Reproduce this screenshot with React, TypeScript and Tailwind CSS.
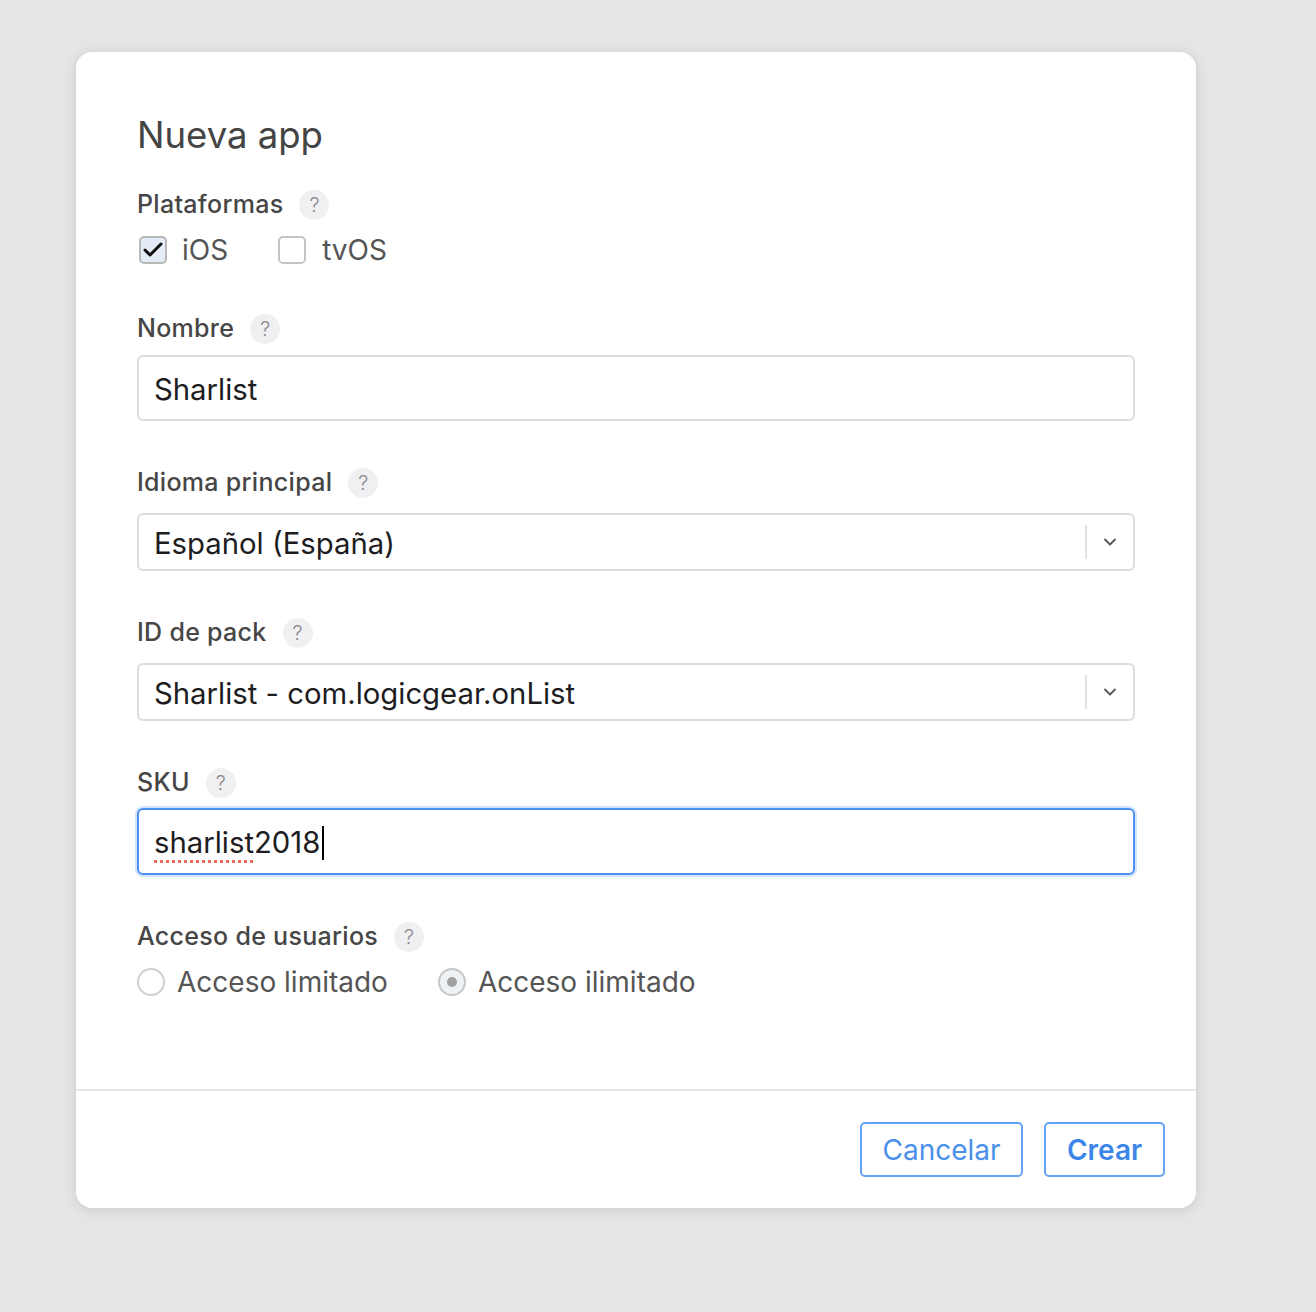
import { Check, ChevronDown } from "lucide-react";

function Help() {
  return (
    <span className="ml-[16px] inline-flex h-[30px] w-[30px] items-center justify-center rounded-full bg-[#f0f0f3] text-[20px] font-light tracking-normal text-[#8a8a8e]">
      ?
    </span>
  );
}

function Label({ text, className = "" }: { text: string; className?: string }) {
  return (
    <div
      className={`flex h-[30px] items-center text-[25px] font-medium tracking-[0.3px] text-[#464646] ${className}`}>
      <span>{text}</span>
      <Help />
    </div>
  );
}

function Select({ value, className = "" }: { value: string; className?: string }) {
  return (
    <div
      className={`flex h-[58px] items-center rounded-[6px] border-2 border-[#dcdcdc] pl-[15px] ${className}`}>
      <span className="flex-1 pt-[3px] text-[29.3px] text-[#1d1d1f]">{value}</span>
      <span className="h-[34px] w-[2px] bg-[#e2e2e2]" />
      <span className="flex w-[46px] items-center justify-center text-[#555]">
        <ChevronDown className="h-[20px] w-[20px]" strokeWidth={2.2} />
      </span>
    </div>
  );
}

export default function App() {
  return (
    <div
      className="min-h-[1312px] bg-[#e5e5e5] pl-[76px] pt-[52px]"
      style={{ fontFamily: "Inter, 'Noto Sans', sans-serif" }}>
      <div className="w-[1120px] overflow-hidden rounded-[16px] bg-white shadow-[0_2px_12px_rgba(0,0,0,0.12)]">
        <div className="px-[61px] pb-[91px] pt-[60px]">
          <h1 className="h-[46px] text-[36.5px] leading-[46px] font-normal text-[#444]">Nueva app</h1>

          <Label text="Plataformas" className="mt-[32px]" />
          <div className="mt-[14px] flex h-[32px] items-center text-[28px] text-[#555]">
            <span className="ml-[2px] flex h-[28px] w-[28px] items-center justify-center rounded-[5px] border-2 border-[#b8b8b8] bg-[#e4ecf8] text-[#111]">
              <Check className="h-[24px] w-[24px]" strokeWidth={3} />
            </span>
            <span className="ml-[15px]">iOS</span>
            <span className="ml-[50px] h-[28px] w-[28px] rounded-[5px] border-2 border-[#c4c4c4] bg-white" />
            <span className="ml-[16px]">tvOS</span>
          </div>

          <Label text="Nombre" className="mt-[48px]" />
          <div className="mt-[11px] flex h-[66px] items-center rounded-[6px] border-2 border-[#dcdcdc] pl-[15px] pt-[3px] text-[29.3px] text-[#1d1d1f]">
            Sharlist
          </div>

          <Label text="Idioma principal" className="mt-[47px]" />
          <Select value="Español (España)" className="mt-[15px]" />

          <Label text="ID de pack" className="mt-[47px]" />
          <Select value="Sharlist - com.logicgear.onList" className="mt-[15px]" />

          <Label text="SKU" className="mt-[47px]" />
          <div className="mt-[10px] flex h-[67px] items-center rounded-[6px] border-2 border-[#4b8ff0] pl-[15px] pt-[3px] text-[29.3px] text-[#1d1d1f] shadow-[0_0_0_2px_rgba(75,143,240,0.25)]">
            <span className="underline decoration-[#ec6b5e] decoration-dotted decoration-[3px] underline-offset-[7px]">
              sharlist
            </span>
            <span>2018</span>
            <span className="ml-[2px] h-[34px] w-[2px] bg-black" />
          </div>

          <Label text="Acceso de usuarios" className="mt-[47px]" />
          <div className="mt-[14px] flex h-[32px] items-center text-[28px] text-[#555]">
            <span className="h-[28px] w-[28px] rounded-full border-2 border-[#d0d0d0] bg-white" />
            <span className="ml-[12px]">Acceso limitado</span>
            <span className="ml-[50px] flex h-[28px] w-[28px] items-center justify-center rounded-full border-2 border-[#c8c8c8] bg-[#eef1f6]">
              <span className="h-[10px] w-[10px] rounded-full bg-[#a0a0a0]" />
            </span>
            <span className="ml-[12px]">Acceso ilimitado</span>
          </div>
        </div>

        <div className="flex justify-end gap-[21px] border-t-2 border-[#e6e6e6] pb-[31px] pr-[31px] pt-[31px]">
          <button className="h-[55px] w-[163px] rounded-[5px] border-2 border-[#64a2f2] text-[28px] text-[#4a90ea]">
            Cancelar
          </button>
          <button className="h-[55px] w-[121px] rounded-[5px] border-2 border-[#64a2f2] text-[28px] font-semibold text-[#3c86e8]">
            Crear
          </button>
        </div>
      </div>
    </div>
  );
}
